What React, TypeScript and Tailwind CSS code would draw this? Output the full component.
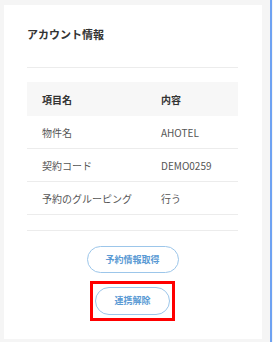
import React from "react";

const font = { fontFamily: '"Noto Sans CJK JP", "Noto Sans", sans-serif' };

export default function App() {
  const rows = [
    ["物件名", "AHOTEL"],
    ["契約コード", "DEMO0259"],
    ["予約のグルーピング", "行う"],
  ];
  return (
    <div className="w-[273px] h-[342px] bg-[#f5f5f5] flex overflow-hidden" style={font}>
      <div className="ml-[4px] mt-[5px] w-[258px] h-[334px] bg-white flex flex-col px-[23px] pt-[21px]">
        <div className="text-[11px] leading-[16px] font-bold text-[#333] tracking-[0px]">アカウント情報</div>
        <div className="mt-[25px] h-px bg-[#ececec] w-[211px]" />
        <div className="mt-[14px] w-[211px] flex flex-col">
          <div className="h-[34px] bg-[#f7f7f7] flex items-center text-[10px] font-bold text-[#333]">
            <div className="w-[119px] pl-[15px]">項目名</div>
            <div className="pl-[15px]">内容</div>
          </div>
          {rows.map(([k, v]) => (
            <div key={k} className="h-[33px] border-b border-[#ececec] flex items-center text-[10px] text-[#555]">
              <div className="w-[119px] pl-[15px]">{k}</div>
              <div className="pl-[15px]">{v}</div>
            </div>
          ))}
        </div>
        <div className="mt-[15px] h-px bg-[#ececec] w-[211px]" />
        <div className="flex flex-col items-center w-[211px]">
          <button className="mt-[15px] w-[92px] h-[27px] rounded-full border border-[#9cc6ea] text-[9px] font-bold text-[#5a9ad4] bg-white flex items-center justify-center">
            予約情報取得
          </button>
          <div className="mt-[8px] w-[85px] h-[40px] border-[3px] border-[#ff0000] flex items-center justify-center">
            <button className="w-[75px] h-[28px] rounded-full border border-[#9cc6ea] text-[9px] font-bold text-[#5a9ad4] bg-white flex items-center justify-center">
              連携解除
            </button>
          </div>
        </div>
      </div>
      <div className="ml-[8px] w-[2px] h-full bg-[#6ea2f2]" />
    </div>
  );
}
